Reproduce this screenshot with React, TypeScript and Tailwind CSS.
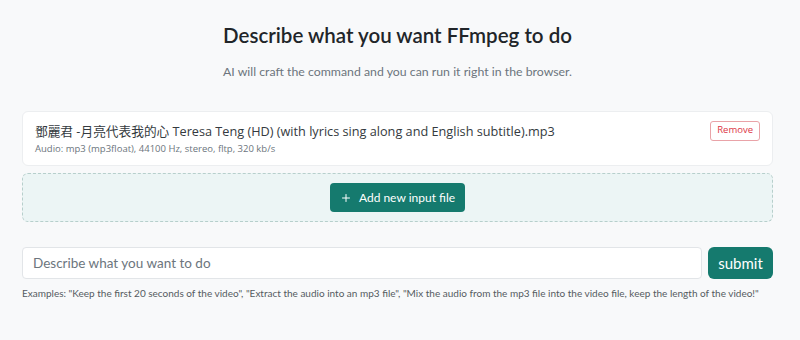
import { Plus } from 'lucide-react';

export default function App() {
  return (
    <div className="w-[800px] h-[340px] bg-[#f8f9fa] font-['Lato','Noto_Sans_CJK_TC',sans-serif] text-[#212529]">
      <div className="pl-[22px] pr-[27px] pt-[21px]">
        {/* header */}
        <h1 className="text-center text-[20.5px] leading-[28px] font-semibold text-[#212529]">
          Describe what you want FFmpeg to do
        </h1>
        <p className="mt-[14px] text-center text-[12.3px] leading-[18px] text-[#6c757d]">
          AI will craft the command and you can run it right in the browser.
        </p>

        {/* input file card */}
        <div className="mt-[30px] h-[55px] bg-white border border-[#eceef0] rounded-md px-[12px] flex items-center justify-between">
          <div className="flex flex-col">
            <span className="text-[12.7px] leading-[18px] text-[#343a40] font-['Open_Sans','Noto_Sans_CJK_TC',sans-serif]">
              鄧麗君 -月亮代表我的心 Teresa Teng (HD) (with lyrics sing along and English subtitle).mp3
            </span>
            <span className="mt-[3px] text-[9.5px] leading-[12px] text-[#6c757d] font-['Open_Sans',sans-serif]">
              Audio: mp3 (mp3float), 44100 Hz, stereo, fltp, 320 kb/s
            </span>
          </div>
          <button className="mb-[16px] h-[20px] px-[6px] border border-[#e9a3a8] rounded-[3px] text-[9.5px] text-[#dc3545] bg-white font-['Open_Sans',sans-serif]">
            Remove
          </button>
        </div>

        {/* add new input */}
        <div className="mt-[7px] h-[49px] bg-[#ecf5f5] border border-dashed border-[#b7cfcc] rounded-md flex items-center justify-center">
          <button className="h-[29px] px-[10px] rounded-[4px] bg-[#157a6e] text-white text-[12px] flex items-center gap-[7px]">
            <Plus className="w-[12px] h-[12px]" strokeWidth={2} />
            Add new input file
          </button>
        </div>

        {/* prompt */}
        <div className="mt-[25px] flex gap-[6px]">
          <input
            type="text"
            placeholder="Describe what you want to do"
            className="flex-1 h-[32px] bg-white border border-[#e2e5e8] rounded-[4px] px-[10px] text-[13.5px] font-['Lato',sans-serif] placeholder:text-[#6c757d] outline-none"
          />
          <button className="w-[65px] h-[32px] rounded-[6px] bg-[#157a6e] text-white text-[15px]">
            submit
          </button>
        </div>
        <p className="mt-[8px] text-[10px] leading-[12px] text-[#555b61]">
          Examples: "Keep the first 20 seconds of the video", "Extract the audio into an mp3 file", "Mix the audio from the mp3 file into the video file, keep the length of the video!"
        </p>
      </div>
    </div>
  );
}
